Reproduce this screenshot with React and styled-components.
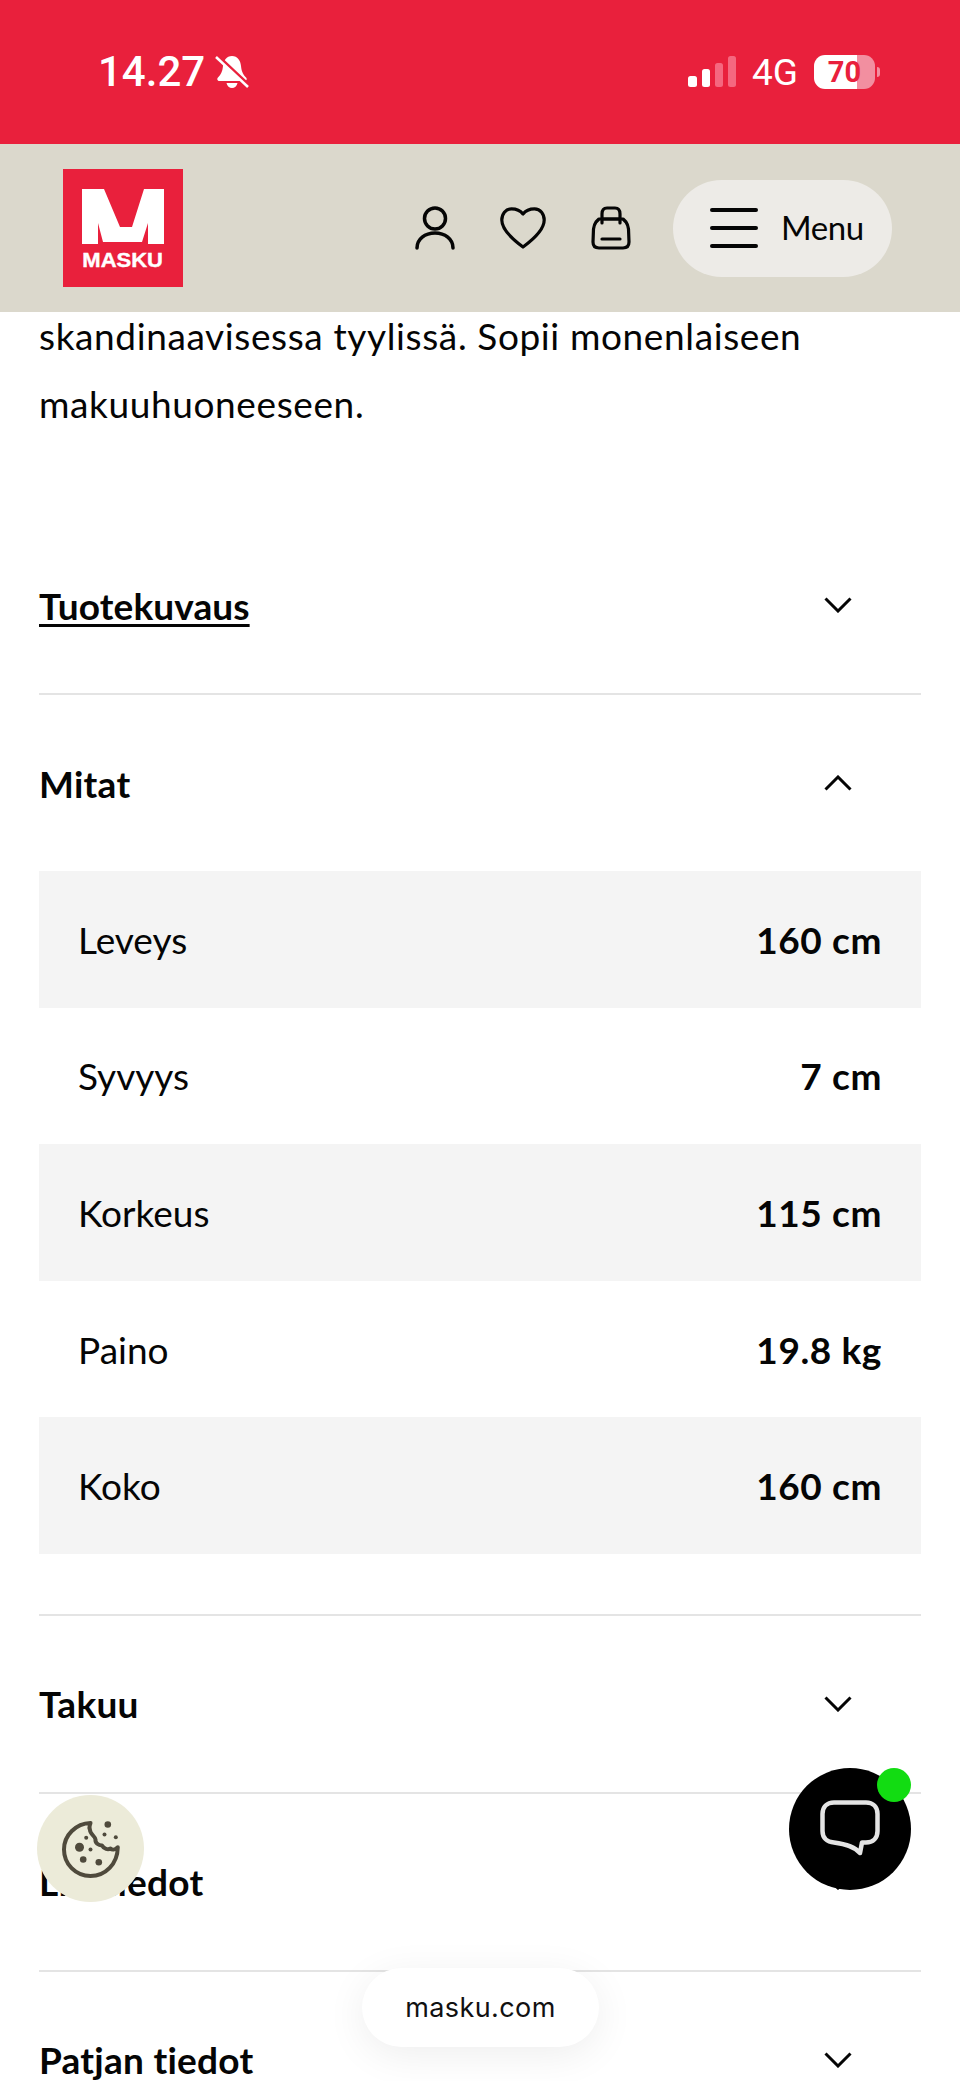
import React from "react";
import styled, { createGlobalStyle } from "styled-components";

const Global = createGlobalStyle`
  html, body { margin: 0; padding: 0; background: #fff; }
  * { box-sizing: border-box; }
`;

const Page = styled.div`
  position: relative;
  width: 960px;
  height: 2081px;
  overflow: hidden;
  background: #fff;
  color: #050505;
  font-family: "Lato", "Liberation Sans", sans-serif;
`;

const StatusBar = styled.div`
  height: 144px;
  background: #e9203c;
  display: flex;
  align-items: center;
  justify-content: space-between;
  padding: 0 80px 0 98px;
  color: #fff;
  font-family: "Roboto", sans-serif;
`;
const StatusGroup = styled.div`
  display: flex;
  align-items: center;
  gap: ${p => p.$gap || 10}px;
`;
const Clock = styled.span`
  font-size: 42px;
  font-weight: 500;
  line-height: 1;
`;
const Network = styled.span`
  font-size: 37px;
  line-height: 1;
  font-weight: 400;
`;
const Battery = styled.div`
  display: flex;
  align-items: center;
  gap: 2px;
`;
const BatteryBody = styled.div`
  width: 61px;
  height: 34px;
  border-radius: 11px;
  background: linear-gradient(90deg, #fff 0 70%, #f28fa0 70% 100%);
  color: #e9203c;
  font-size: 29px;
  font-weight: 700;
  line-height: 34px;
  text-align: center;
`;
const BatteryCap = styled.div`
  width: 3px;
  height: 10px;
  border-radius: 0 3px 3px 0;
  background: #f28fa0;
`;

const Header = styled.header`
  position: relative;
  z-index: 2;
  height: 168px;
  background: #dbd8cc;
  display: flex;
  align-items: center;
  padding: 0 68px 0 63px;
`;
const Logo = styled.div`
  width: 120px;
  height: 118px;
  background: #e9203c;
  display: flex;
  flex-direction: column;
  align-items: center;
  padding-top: 20px;
`;
const LogoWord = styled.span`
  margin-top: 4px;
  color: #fff;
  font-family: "Liberation Sans", sans-serif;
  font-weight: 700;
  font-size: 20px;
  line-height: 24px;
  transform: scaleX(1.1);
  -webkit-text-stroke: 0.4px #fff;
`;
const HeaderActions = styled.div`
  margin-left: auto;
  display: flex;
  align-items: center;
`;
const IconButton = styled.div`
  width: 88px;
  display: flex;
  justify-content: center;
`;
const MenuButton = styled.div`
  margin-left: 18px;
  width: 219px;
  height: 97px;
  border-radius: 49px;
  background: #edebe7;
  display: flex;
  align-items: center;
  gap: 23px;
  padding-left: 37px;
  padding-bottom: 2px;
  font-size: 33px;
  letter-spacing: -0.4px;
  line-height: 1;
`;
const Burger = styled.div`
  width: 48px;
  display: flex;
  flex-direction: column;
  gap: 14px;
  margin-top: 2px;
`;
const BurgerLine = styled.span`
  display: block;
  height: 4px;
  border-radius: 2px;
  background: #050505;
`;

const Content = styled.main`
  padding: 0 39px;
`;
const Description = styled.p`
  margin: -10px 0 79px;
  font-size: 37px;
  line-height: 68px;
  letter-spacing: 0.62px;
`;
const AccordionRow = styled.div`
  height: ${p => (p.$open ? 176 : 178)}px;
  display: flex;
  align-items: center;
  justify-content: space-between;
  padding-right: 69px;
  border-bottom: ${p => (p.$open ? "none" : "2px solid #e4e4e4")};
`;
const AccordionTitle = styled.span`
  font-size: 37px;
  font-weight: 700;
  letter-spacing: ${p => (p.$underline ? "0.1px" : "0.25px")};
  text-decoration: ${p => (p.$underline ? "underline" : "none")};
  text-underline-offset: 4px;
`;
const SpecTable = styled.div`
  margin-bottom: 60px;
`;
const SpecRow = styled.div`
  height: 136.6px;
  display: flex;
  align-items: center;
  justify-content: space-between;
  padding: 0 39px;
  font-size: 37px;
  background: ${p => (p.$shaded ? "#f4f4f4" : "#fff")};
`;
const SpecValue = styled.span`
  font-weight: 700;
  letter-spacing: 0.6px;
`;
const Divider = styled.div`
  height: 2px;
  background: #e4e4e4;
`;

const CookieButton = styled.div`
  position: absolute;
  left: 37px;
  top: 1795px;
  width: 107px;
  height: 107px;
  border-radius: 50%;
  background: #ecebd9;
  display: flex;
  align-items: center;
  justify-content: center;
`;
const ChatButton = styled.div`
  position: absolute;
  left: 789px;
  top: 1768px;
  width: 122px;
  height: 122px;
  border-radius: 50%;
  background: #000;
  display: flex;
  align-items: center;
  justify-content: center;
`;
const OnlineDot = styled.span`
  position: absolute;
  right: 0;
  top: 0;
  width: 34px;
  height: 34px;
  border-radius: 50%;
  background: #12dc12;
`;
const UrlPill = styled.div`
  position: absolute;
  left: 362px;
  top: 1968px;
  width: 237px;
  height: 79px;
  border-radius: 40px;
  background: #fff;
  box-shadow: 0 8px 40px rgba(0, 0, 0, 0.07);
  display: flex;
  align-items: center;
  justify-content: center;
  font-family: "Inter", sans-serif;
  font-size: 27px;
  letter-spacing: 0.4px;
  color: #111;
`;

const Chevron = ({ up }) => (
  <svg width="28" height="16" viewBox="0 0 28 16" fill="none" stroke="#050505" strokeWidth="3">
    <path d={up ? "M1.500 14.500 14 2 26.500 14.500" : "M1.500 1.500 14 14 26.500 1.500"} />
  </svg>
);

const specs = [
  ["Leveys", "160 cm"],
  ["Syvyys", "7 cm"],
  ["Korkeus", "115 cm"],
  ["Paino", "19.8 kg"],
  ["Koko", "160 cm"],
];

export default function App() {
  return (
    <Page>
      <Global />
      <StatusBar>
        <StatusGroup $gap={10}>
          <Clock>14.27</Clock>
          <svg width="34" height="34" viewBox="0 0 34 34" fill="#fff">
            <path d="M17 1C11.500 1 8.500 5.500 8 11 7.500 17 5.500 20 3 22.500 1.500 24 2.500 26 4.500 26H29.500C31.500 26 32.500 24 31 22.500 28.500 20 26.500 17 26 11 25.500 5.500 22.500 1 17 1ZM11.500 28H22.500C22 31 19.500 33 17 33S12 31 11.500 28Z" />
            <path d="M2.500 0.500 34 30" stroke="#e9203c" strokeWidth="3" />
            <path d="M1 2 33 32" stroke="#fff" strokeWidth="2.500" />
          </svg>
        </StatusGroup>
        <StatusGroup $gap={16}>
          <svg width="48" height="32" viewBox="0 0 48 32">
            <rect x="0" y="20" width="9" height="11" rx="2.500" fill="#fff" />
            <rect x="14" y="13" width="8" height="18" rx="2.500" fill="#fff" />
            <rect x="27" y="7" width="8" height="24" rx="2.500" fill="#f5677f" />
            <rect x="40" y="0" width="8" height="31" rx="2.500" fill="#f5677f" />
          </svg>
          <Network>4G</Network>
          <Battery>
            <BatteryBody>70</BatteryBody>
            <BatteryCap />
          </Battery>
        </StatusGroup>
      </StatusBar>

      <Header>
        <Logo>
          <svg width="82" height="55" viewBox="0 0 82 55" fill="#fff">
            <path d="M0 0H22L38 38H50L62 0H82V55H66V34L60 53H21L16 34V55H0Z" />
          </svg>
          <LogoWord>MASKU</LogoWord>
        </Logo>
        <HeaderActions>
          <IconButton>
            <svg width="40" height="44" viewBox="0 0 40 44" fill="none" stroke="#050505" strokeWidth="3.500" strokeLinecap="round">
              <circle cx="20" cy="12.500" r="10.500" />
              <path d="M2 42c0-9 8-15 18-15s18 6 18 15" />
            </svg>
          </IconButton>
          <IconButton>
            <svg width="46" height="42" viewBox="0 0 46 42" fill="none" stroke="#050505" strokeWidth="3.200" strokeLinejoin="round">
              <path d="M23 7C20 3 15 1.800 11.500 1.800 5.500 1.800 1.800 7 1.800 13c0 10 11 19.500 21.200 27C33.200 32.500 44.200 23 44.200 13c0-6-3.700-11.200-9.700-11.200C31 1.800 26 3 23 7Z" />
            </svg>
          </IconButton>
          <IconButton>
            <svg width="40" height="44" viewBox="0 0 40 44" fill="none" stroke="#050505" strokeWidth="3.200" strokeLinecap="round" strokeLinejoin="round">
              <path d="M8 13 5 16C3.500 18 3 20 2.500 23L2 36c0 4 2 6 6 6h24c4 0 6-2 6-6l-.5-13c-.5-3-1-5-2.500-7l-3-3Z" />
              <path d="M11 17V8c0-4 2-6 5-6h8c3 0 5 2 5 6v9M11 13h18" />
              <path d="M11 33h18" />
            </svg>
          </IconButton>
          <MenuButton>
            <Burger>
              <BurgerLine />
              <BurgerLine />
              <BurgerLine />
            </Burger>
            <span>Menu</span>
          </MenuButton>
        </HeaderActions>
      </Header>

      <Content>
        <Description>
          skandinaavisessa tyylissä. Sopii monenlaiseen
          <br />
          makuuhuoneeseen.
        </Description>
        <AccordionRow>
          <AccordionTitle $underline>Tuotekuvaus</AccordionTitle>
          <Chevron />
        </AccordionRow>
        <AccordionRow $open>
          <AccordionTitle>Mitat</AccordionTitle>
          <Chevron up />
        </AccordionRow>
        <SpecTable>
          {specs.map(([label, value], i) => (
            <SpecRow key={label} $shaded={i % 2 === 0}>
              <span>{label}</span>
              <SpecValue>{value}</SpecValue>
            </SpecRow>
          ))}
        </SpecTable>
        <Divider />
        <AccordionRow>
          <AccordionTitle>Takuu</AccordionTitle>
          <Chevron />
        </AccordionRow>
        <AccordionRow>
          <AccordionTitle>Lisätiedot</AccordionTitle>
          <Chevron />
        </AccordionRow>
        <AccordionRow>
          <AccordionTitle>Patjan tiedot</AccordionTitle>
          <Chevron />
        </AccordionRow>
      </Content>

      <CookieButton>
        <svg width="60" height="60" viewBox="0 0 60 60" fill="#4f4a3c">
          <path
            d="M29.500 4C15 4.500 3 16 3 30.500 3 45 14.500 57 29.500 57S56.500 45 56.800 28.200C54 31 51 31 49.500 29.500 47 31 43 30 41 26.500 37.500 26.500 34 24 34.500 20.500 34 17 29 15 29 11 27.500 8 29 6 29.500 4Z"
            fill="none"
            stroke="#4f4a3c"
            strokeWidth="4"
            strokeLinejoin="round"
          />
          <circle cx="18.500" cy="28.200" r="4.500" />
          <circle cx="22.200" cy="40.500" r="3.300" />
          <circle cx="37.800" cy="43.200" r="3.300" />
          <circle cx="29.500" cy="30.500" r="2" />
          <circle cx="25.200" cy="18.800" r="2" />
          <circle cx="46.800" cy="5.500" r="3.300" />
          <circle cx="43.500" cy="15.500" r="2" />
          <circle cx="54.800" cy="18.200" r="2" />
        </svg>
      </CookieButton>
      <ChatButton>
        <svg width="60" height="58" viewBox="0 0 60 58" fill="none" stroke="#e4e4e4" strokeWidth="4.500" strokeLinejoin="round">
          <path d="M14 2.500H46C53 2.500 57.500 7 57.500 14V31C57.500 38 53 42.500 46 42.500H42L40 53C35 47 26 44 14 42.500 7 42 2.500 38 2.500 31V14C2.500 7 7 2.500 14 2.500Z" />
        </svg>
        <OnlineDot />
      </ChatButton>
      <UrlPill>masku.com</UrlPill>
    </Page>
  );
}
